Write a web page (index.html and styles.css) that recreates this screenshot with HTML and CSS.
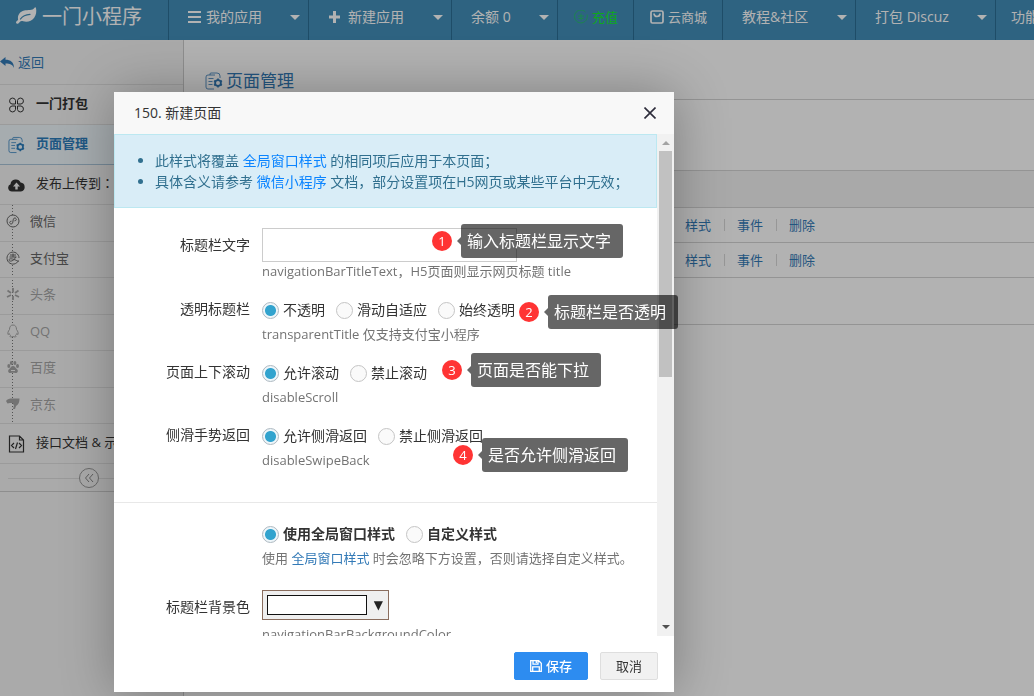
FILE: index.html
```html
<!DOCTYPE html>
<html lang="zh-CN">
<head>
<meta charset="utf-8">
<title>一门小程序 - 页面管理</title>
<link rel="stylesheet" href="styles.css">
</head>
<body>
<svg class="defs" aria-hidden="true">
  <symbol id="pages" viewBox="0 0 18 18"><g fill="none" stroke="currentColor"><path stroke-width=".8" d="M9 17H3a2 2 0 0 1-2-2V5a2 2 0 0 1 2-2h7M5 3V2a1 1 0 0 1 1-1h6a3 3 0 0 1 3 3v2M3.500 6.500h5M3.500 9.500h4M3.500 12.500h4"/><circle cx="13" cy="11" r="2.900" stroke-width="1.800"/><path stroke-width="1.600" d="M13 6.500v1.500M13 14v1.500M9.100 8.700l1.300.8M15.600 12.500l1.300.8M9.100 13.300l1.300-.8M15.600 9.500l1.300-.8"/></g></symbol>
</svg>

<header class="navbar">
  <a class="brand" href="#">
    <svg width="22" height="18" viewBox="0 0 22 18"><path fill="currentColor" d="M21 1c.7 3.500.2 7-1.800 9.700-2.600 3.600-7 4.800-11 3.600-1.200-.4-2-.5-3 .3-.8.700-1.400 2.200-2.600 2.200-.9 0-1.900-1-1.500-1.900.4-.8 1.800-1.300 2-2.300C2.300 8 5 4.400 9.200 3.500 13 2.700 17.500 4 19.500.800c.5-.8 1.200-.8 1.500.2z"/><path fill="none" stroke="#438eb9" stroke-width="1.300" stroke-linecap="round" d="M5.500 12C7.500 9 10.500 7.500 15 7.300"/></svg>
    一门小程序
  </a>
  <nav class="menu">
    <a class="item w140" href="#"><svg width="13" height="12" viewBox="0 0 13 12"><path stroke="currentColor" stroke-width="2" d="M0 1h13M0 6h13M0 11h13"/></svg>我的应用<i class="caret"></i></a>
    <a class="item w143" href="#"><svg class="plus" width="13" height="12" viewBox="0 0 13 12"><path stroke="currentColor" stroke-width="3" d="M1 6h11M6.500 0v12"/></svg>新建应用<i class="caret"></i></a>
    <a class="item w106" href="#">余额 0<i class="caret"></i></a>
    <a class="item w76 green" href="#"><svg width="14" height="14" viewBox="0 0 14 14" fill="none" stroke="currentColor"><path d="M11.500 2A6.400 6.400 0 1 0 13 4.500M7 3.500v7M4 6h6M4.500 8.500h5"/></svg>充值</a>
    <a class="item w89" href="#"><svg width="14" height="14" viewBox="0 0 14 14" fill="none" stroke="currentColor" stroke-width="1.700"><rect x="1" y="1" width="12" height="12" rx="1.500"/><path d="M4 3.500c0 4 6 4 6 0"/></svg>云商城</a>
    <a class="item w133" href="#">教程&amp;社区<i class="caret"></i></a>
    <a class="item w140" href="#">打包 Discuz<i class="caret"></i></a>
    <a class="item last" href="#">功能</a>
  </nav>
</header>

<div class="page">
  <aside class="sidebar">
    <a class="back" href="#"><svg width="15" height="11" viewBox="0 0 15 11"><path fill="currentColor" d="M0 4.500 5.500 0v2.700C10.500 2.700 14 5 14 11 12.500 7.500 10 6.500 5.500 6.500V9z"/></svg>返回</a>
    <a class="top" href="#"><svg width="16" height="16" viewBox="0 0 16 16" fill="none" stroke="currentColor"><path d="M7 7H3.500A3 3 0 1 1 7 3.500zM9 7V3.500A3 3 0 1 1 12.500 7zM7 9v3.500A3 3 0 1 1 3.500 9zM9 9h3.500A3 3 0 1 1 9 12.500z"/></svg><b>一门打包</b></a>
    <a class="top active" href="#"><svg width="18" height="18"><use href="#pages"/></svg><b>页面管理</b></a>
    <a class="top" href="#"><svg width="17" height="14" viewBox="0 0 17 14"><path fill="currentColor" d="M4 13.500A3.800 3.800 0 0 1 2.500 6.200 5.300 5.300 0 0 1 12.600 4.600 4.500 4.500 0 0 1 13 13.500z"/><path fill="#f4f4f4" d="m8.500 4.500 3.500 4h-2.300v3H7.300v-3H5z"/></svg>发布上传到<span class="mark">：</span></a>
    <div class="subs">
      <a class="sub" href="#"><svg width="14" height="14" viewBox="0 0 14 14" fill="#f4f4f4" stroke="currentColor"><circle cx="7" cy="7" r="6"/><path fill="none" d="M5.500 7.200C3 7 3.300 10 5.200 10 8 10 6 4 8.800 4c1.900 0 2.200 3-.3 2.800"/></svg>微信</a>
      <a class="sub" href="#"><svg width="14" height="14" viewBox="0 0 14 14" fill="#f4f4f4" stroke="currentColor"><path d="M12.500 9.500A6 6 0 1 1 13 7"/><path fill="none" d="M4 4h6M7 2.500v3.500M3.500 6h7M9.500 6C8 10.500 3 11 3 9s4-1.500 9.500 1.500"/></svg>支付宝</a>
      <a class="sub off" href="#"><svg width="14" height="14" viewBox="0 0 14 14" fill="none" stroke="currentColor" stroke-width="1.800"><path d="M7 1v4.500M7 9v4M1.500 3.500 5 6M12.500 3.500 9 6M1 10l4-2M13 10 9 8"/></svg>头条</a>
      <a class="sub off" href="#"><svg width="14" height="14" viewBox="0 0 14 14" fill="#f4f4f4" stroke="currentColor"><path d="M7 1C4.500 1 3.500 3 3.500 5.500 2 7.500 1.500 9 2 10.500l1.300-1c.2 1 .7 1.500 1.200 2-1 .7-.5 1.500.5 1.500s1.500-.3 2-.7c.5.400 1 .7 2 .7s1.500-.8.500-1.500c.5-.5 1-1 1.200-2l1.300 1c.5-1.500 0-3-1.500-5C10.500 3 9.500 1 7 1z"/></svg>QQ</a>
      <a class="sub off" href="#"><svg width="14" height="14" viewBox="0 0 14 14" fill="currentColor"><ellipse cx="2.800" cy="6" rx="1.500" ry="2"/><ellipse cx="5.300" cy="3" rx="1.500" ry="2"/><ellipse cx="8.900" cy="3" rx="1.500" ry="2"/><ellipse cx="11.500" cy="6" rx="1.500" ry="2"/><path d="M7 6c2 0 2.500 2 4 3.200 1.700 1.500.7 4-1.500 3.800-1.500-.3-3.500-.3-5 0-2.200.2-3.200-2.300-1.500-3.800C4.500 8 5 6 7 6z"/><path stroke="#f4f4f4" d="M5 10.500h4"/></svg>百度</a>
      <a class="sub off" href="#"><svg width="14" height="14" viewBox="0 0 14 14" fill="currentColor"><path d="M0 4c1-2 4-2.500 6-2.500h7.500C13.500 6 12 8 10 9l-1 3H7l1-3.500L6.500 6H4L1.500 6.500z"/></svg>京东</a>
    </div>
    <a class="top docs" href="#"><svg width="16" height="18" viewBox="0 0 16 18" fill="none" stroke="currentColor" stroke-width="1.200"><path d="M1 1h10l4 4v12H1zM11 1v4h4M5.500 8l-2.500 2.500L5.500 13M10.500 8l2.500 2.500-2.500 2.500M9 7.500 7 14"/></svg>接口文档 &amp; 示例</a>
    <div class="fold"><button class="foldbtn" type="button" aria-label="收起菜单"><svg width="10" height="10" viewBox="0 0 10 10" fill="none" stroke="currentColor"><path d="M5 1 1.500 5 5 9M9 1 5.500 5 9 9"/></svg></button></div>
  </aside>

  <main class="main">
    <h1 class="title"><svg width="18" height="18"><use href="#pages"/></svg>页面管理</h1>
    <table class="list">
      <thead><tr><th class="name"></th><th></th></tr></thead>
      <tbody>
        <tr><td></td><td><div class="acts"><a href="#">样式</a><i></i><a href="#">事件</a><i></i><a href="#">删除</a></div></td></tr>
        <tr><td></td><td><div class="acts"><a href="#">样式</a><i></i><a href="#">事件</a><i></i><a href="#">删除</a></div></td></tr>
      </tbody>
    </table>
    <div class="pager"></div>
  </main>
</div>

<div class="shade"></div>

<section class="dialog" role="dialog" aria-label="新建页面">
  <header class="dhead"><span>150. 新建页面</span><button class="close" type="button" aria-label="关闭"><svg width="12" height="12" viewBox="0 0 12 12"><path stroke="currentColor" stroke-width="1.600" d="m.5.500 11 11M11.500.500l-11 11"/></svg></button></header>
  <div class="dbody">
    <div class="content">
      <ul class="alert">
        <li>此样式将覆盖 <a href="#">全局窗口样式</a> 的相同项后应用于本页面<span class="mark">；</span></li>
        <li>具体含义请参考 <a href="#">微信小程序</a> 文档<span class="mark">，</span>部分设置项在H5网页或某些平台中无效<span class="mark">；</span></li>
      </ul>
      <form class="form">
        <div class="row first"><label class="label" for="navtext">标题栏文字</label><div class="field"><input class="text" id="navtext" type="text"><p class="hint">navigationBarTitleText<span class="mark">，</span>H5页面则显示网页标题 title</p></div></div>
        <div class="row"><span class="label">透明标题栏</span><div class="field"><div class="radios"><label><input type="radio" name="t" checked>不透明</label><label><input type="radio" name="t">滑动自适应</label><label><input type="radio" name="t">始终透明</label></div><p class="hint">transparentTitle 仅支持支付宝小程序</p></div></div>
        <div class="row"><span class="label">页面上下滚动</span><div class="field"><div class="radios"><label><input type="radio" name="s" checked>允许滚动</label><label><input type="radio" name="s">禁止滚动</label></div><p class="hint">disableScroll</p></div></div>
        <div class="row"><span class="label">侧滑手势返回</span><div class="field"><div class="radios"><label><input type="radio" name="b" checked>允许侧滑返回</label><label><input type="radio" name="b">禁止侧滑返回</label></div><p class="hint">disableSwipeBack</p></div></div>
        <hr class="rule">
        <div class="row"><span class="label"></span><div class="field"><div class="radios strong"><label><input type="radio" name="g" checked>使用全局窗口样式</label><label><input type="radio" name="g">自定义样式</label></div><p class="hint">使用 <a href="#">全局窗口样式</a> 时会忽略下方设置<span class="mark">，</span>否则请选择自定义样式。</p></div></div>
        <div class="row color"><label class="label" for="bg">标题栏背景色</label><div class="field"><button class="picker" id="bg" type="button"><span class="swatch"></span><span class="down">▼</span></button><p class="hint">navigationBarBackgroundColor</p></div></div>
      </form>
    </div>
    <div class="scroll"><i class="up"></i><i class="thumb"></i><i class="dn"></i></div>
  </div>
  <footer class="dfoot">
    <button class="save" type="button"><svg width="12" height="12" viewBox="0 0 12 12" fill="none" stroke="currentColor" stroke-width="1.300"><path d="M.7.700h8l2.600 2.600v8H.7zM3 .7v3.500h5V.7M2.700 11.300V6.800h6.600v4.500M6.300 1v2"/></svg>保存</button>
    <button class="cancel" type="button">取消</button>
  </footer>
</section>

<div class="note n1"><b>1</b><span>输入标题栏显示文字</span></div>
<div class="note n2"><b>2</b><span>标题栏是否透明</span></div>
<div class="note n3"><b>3</b><span>页面是否能下拉</span></div>
<div class="note n4"><b>4</b><span>是否允许侧滑返回</span></div>
</body>
</html>
```
FILE: styles.css
```css
* { box-sizing: border-box; }
html, body { height: 100%; }
body {
  margin: 0;
  display: flex;
  flex-direction: column;
  overflow: hidden;
  background: #fff;
  color: #333;
  font: 14px/20px "Open Sans", "Noto Sans CJK SC", sans-serif;
}
button, input { font: inherit; }
a { color: #337ab7; text-decoration: none; }
svg { flex: none; }
.defs { position: absolute; width: 0; height: 0; }
.mark { font-family: "Noto Sans CJK TC", sans-serif; line-height: 1; }

/* top bar */
.navbar { display: flex; flex: none; height: 40px; background: #438eb9; overflow: hidden; }
.brand { display: flex; flex: none; gap: 5px; width: 168px; padding: 7px 0 0 15px; color: #fff; font-size: 20px; }
.menu { display: flex; flex: 1; }
.item { display: flex; flex: none; align-items: center; gap: 5px; padding: 0 8px 6px 19px; border-left: 1px solid #2c6f96; color: #fff; white-space: nowrap; }
.plus { margin-right: 2px; }
.w140 { width: 140px; }
.w143 { width: 143px; }
.w106 { width: 106px; }
.w76 { width: 76px; }
.w89 { width: 89px; }
.w133 { width: 133px; }
.w76, .w89 { padding-left: 16px; font-size: 13px; gap: 4px; }
.last { flex: 1 0 auto; padding-left: 15px; }
.green { color: #14f02c; }
.green svg { color: #27c070; }
.caret { margin-left: auto; border: 5px solid transparent; border-top-color: #fff; border-bottom: 0; }

/* side menu */
.page { display: flex; flex: 1; min-height: 0; }
.sidebar { flex: none; width: 184px; background: #f4f4f4; border-right: 1px solid #ccc; }
.sidebar a { display: flex; align-items: center; white-space: nowrap; border-bottom: 1px solid #dedede; }
.sidebar .back { height: 45px; gap: 3px; font-size: 13px; }
.top { height: 40px; padding: 0 0 4px 8px; color: #333; font-size: 13px; }
.top svg { margin: 4px 0 0; }
.top > svg { width: 17px; margin-right: 11px; }
.sidebar .active { background: #eef6fb; color: #2b7dbc; border-color: #a9c4d8; }
.subs { background: repeating-linear-gradient(#777 0 1px, transparent 1px 3px) 12px 0 / 1px 100% no-repeat; }
.sub { height: 37px; padding: 0 0 4px 6px; gap: 10px; color: #666; font-size: 13px; }
.sub:nth-child(even) { height: 36px; }
.off { color: #a5a5a5; }
.docs { overflow: hidden; }
.fold { display: flex; height: 28px; padding-left: 79px; align-items: center; border-bottom: 1px solid #ccc; background: linear-gradient(#ddd, #ddd) 8px 14px / 100% 1px no-repeat; }
.foldbtn { display: flex; align-items: center; justify-content: center; width: 20px; height: 20px; padding: 0; border: 1px solid #999; border-radius: 50%; background: #f4f4f4; color: #888; }

/* page list */
.main { flex: 1; min-width: 0; }
.title { display: flex; align-items: center; gap: 3px; height: 60px; margin: 0; padding: 22px 0 0 21px; border-bottom: 1px solid #d4d4d4; color: #337ab7; font-size: 17px; font-weight: 400; }
.list { width: 100%; margin-top: 70px; border-collapse: collapse; table-layout: fixed; font-size: 13px; }
.list th { height: 37px; background: #f2f2f2; border: solid #d4d4d4; border-width: 1px 0; }
.list .name { width: 501px; }
.list td { height: 35px; padding: 0; border-bottom: 1px solid #d4d4d4; }
.acts { display: flex; align-items: center; }
.acts i { width: 26px; height: 12px; background: linear-gradient(#d8d8d8, #d8d8d8) center / 1px 100% no-repeat; }
.pager { height: 47px; border-bottom: 1px solid #d4d4d4; }

/* dialog */
.shade { position: fixed; inset: 0; background: rgba(0, 0, 0, .3); }
.dialog { position: absolute; left: 114px; top: 92px; width: 560px; background: #fff; box-shadow: 1px 1px 50px rgba(0, 0, 0, .3); }
.dhead { display: flex; align-items: center; justify-content: space-between; height: 42px; padding: 0 18px 0 20px; background: #f8f8f8; }
.close { display: flex; padding: 0; border: 0; background: none; color: #2d2c3b; }
.dbody { display: flex; height: 502px; overflow: hidden; }
.content { flex: 1; min-width: 0; }
.alert { margin: 0; padding: 15px 0 15px 40px; border: 1px solid #bce8f1; background: #d9edf7; color: #31708f; line-height: 21px; }
.alert a { color: #0a84ff; }
.form { padding-top: 20px; }
.row { display: flex; gap: 12px; margin-bottom: 15px; }
.label { flex: none; width: 136px; text-align: right; line-height: 28px; }
.first .label, .color .label { line-height: 34px; }
.field { flex: 1; min-width: 0; white-space: nowrap; }
.text { display: block; width: 255px; height: 34px; padding: 6px; border: 1px solid #ccc; background: #fff; }
.hint { margin: 0; color: #737373; font-size: 13px; line-height: 18px; }
.radios { display: flex; gap: 11px; height: 30px; align-items: center; }
.radios label { display: flex; align-items: center; gap: 4px; }
.radios input { appearance: none; width: 17px; height: 17px; margin: 0; border: 1px solid #c4c4c4; border-radius: 50%; background: #fafafa; }
.radios input:checked { border-color: #adb8c0; background: radial-gradient(circle, #32a3ce 5px, #eef6fa 6px); }
.strong { font-weight: 700; }
.rule { margin: 33px 0 16px; border: 0; border-top: 1px solid #e8e8e8; }
.color { margin-top: 23px; }
.color .hint { margin-top: 5px; }
.picker { display: flex; align-items: center; justify-content: space-between; width: 127px; height: 30px; padding: 0 5px 0 4px; border: 1px solid #8a6d5e; background: #efefef; color: #222; }
.swatch { width: 100px; height: 20px; border: 1px solid #111; background: #fff; }
.down { font: 12px/20px "DejaVu Sans", sans-serif; }
.scroll { display: flex; flex: none; flex-direction: column; align-items: center; width: 17px; padding: 7px 0; background: #f1f1f1; }
.up { border: 4px solid transparent; border-bottom-color: #a3a3a3; border-top: 0; }
.thumb { width: 13px; height: 226px; margin-top: 6px; background: #c1c1c1; }
.dn { margin-top: auto; border: 4px solid transparent; border-top-color: #505050; border-bottom: 0; }
.dfoot { display: flex; justify-content: flex-end; gap: 12px; padding: 16px 16px 12px; }
.save, .cancel { display: flex; align-items: center; justify-content: center; gap: 4px; height: 28px; padding: 0; border-radius: 2px; font-size: 13px; }
.save { width: 74px; border: 1px solid #2d8cf0; background: #2d8cf0; color: #fff; font-weight: 500; }
.cancel { width: 58px; border: 1px solid #dedede; background: #f1f1f1; color: #333; }

/* numbered notes over the dialog */
.note { position: absolute; display: flex; align-items: center; gap: 9px; color: #fff; white-space: nowrap; }
.note b { width: 20px; height: 20px; border-radius: 50%; background: #ff3434; font-size: 13px; font-weight: 400; line-height: 20px; text-align: center; }
.note span { position: relative; height: 34px; padding: 0 12px 0 6px; border-radius: 3px; background: rgba(0, 0, 0, .6); font-size: 16px; line-height: 34px; }
.note span::before { content: ""; position: absolute; left: -4px; top: 13px; border: 4px solid transparent; border-left: 0; border-right-color: rgba(0, 0, 0, .6); }
.n1 { left: 432px; top: 224px; }
.n2 { left: 519px; top: 295px; }
.n3 { left: 442px; top: 353px; }
.n4 { left: 453px; top: 438px; }
```
